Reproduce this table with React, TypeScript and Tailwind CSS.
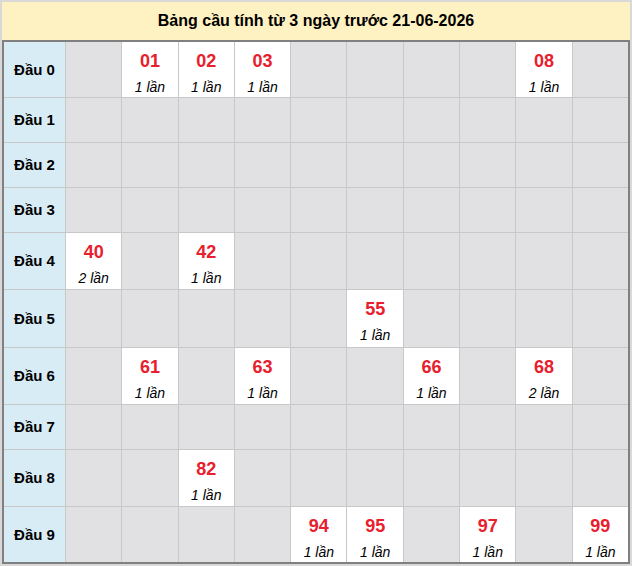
const hits: Record<string, number> = {
  "01": 1,
  "02": 1,
  "03": 1,
  "08": 1,
  "40": 2,
  "42": 1,
  "55": 1,
  "61": 1,
  "63": 1,
  "66": 1,
  "68": 2,
  "82": 1,
  "94": 1,
  "95": 1,
  "97": 1,
  "99": 1,
};

const digits = [0, 1, 2, 3, 4, 5, 6, 7, 8, 9];

function Cell({ num }: { num: string }) {
  const count = hits[num];
  if (!count) return <div className="bg-[#e1e1e3]" />;
  return (
    <div className="flex flex-col items-center bg-white pt-[7px]">
      <div className="text-[18px] font-bold leading-[24px] text-[#e8202d]">{num}</div>
      <div className="mt-[4px] text-[14px] italic leading-[20px] text-black">{count} lần</div>
    </div>
  );
}

export default function App() {
  return (
    <div
      className="flex h-[566px] w-[632px] flex-col border-2 border-[#d9d9d9] bg-[#fff2c2]"
      style={{ fontFamily: '"Liberation Sans", Arial, sans-serif' }}
    >
      <div className="flex h-[38px] shrink-0 items-center justify-center text-[16px] font-bold text-black">
        Bảng cầu tính từ 3 ngày trước 21-06-2026
      </div>
      <div className="grid flex-1 grid-cols-[61px_repeat(10,1fr)] grid-rows-[55px_44px_44px_44px_56px_57px_56px_44px_56px_55px] gap-px border-2 border-[#808080] bg-[#c8c8c8]">
        {digits.map((head) => (
          <div key={head} className="contents">
            <div className="flex items-center justify-center bg-[#d8ecf6] pt-px text-[15px] font-bold text-black">
              Đầu {head}
            </div>
            {digits.map((tail) => (
              <Cell key={tail} num={`${head}${tail}`} />
            ))}
          </div>
        ))}
      </div>
    </div>
  );
}
